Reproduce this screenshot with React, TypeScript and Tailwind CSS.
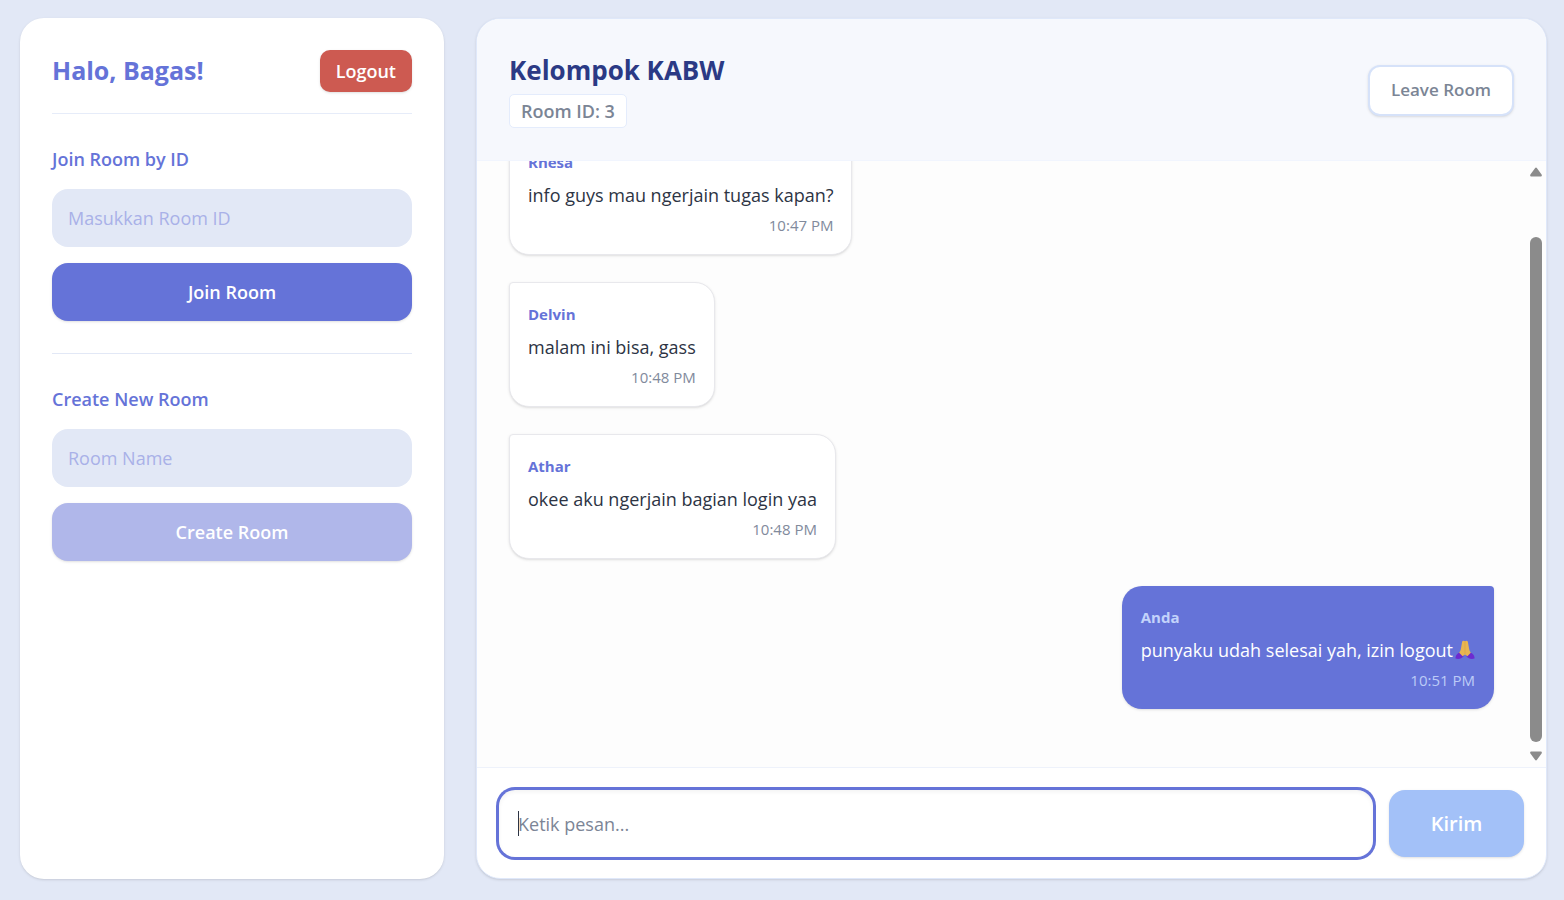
import React, { useEffect, useRef, useState } from 'react';

interface ChatMessage {
  id: number;
  sender: string;
  text: string;
  time: string;
  own?: boolean;
  folded?: boolean;
}

const messages: ChatMessage[] = [
  { id: 1, sender: 'Rhesa', text: 'info guys mau ngerjain tugas kapan?', time: '10:47 PM' },
  { id: 2, sender: 'Delvin', text: 'malam ini bisa, gass', time: '10:48 PM' },
  { id: 3, sender: 'Athar', text: 'okee aku ngerjain bagian login yaa', time: '10:48 PM' },
  { id: 4, sender: 'Anda', text: 'punyaku udah selesai yah, izin logout', time: '10:51 PM', own: true, folded: true },
];

const FoldedHands: React.FC = () => (
  <svg viewBox="0 0 20 20" className="ml-0.5 inline-block h-5 w-5 align-[-3px]" role="img" aria-label="folded hands">
    <path d="M0.5 18.5C0.3 15.5 2.2 13 5 12.4L9 15.6C8 17.8 5.5 19 3 19Z" fill="#6d2bd0" />
    <path d="M19.5 18.5C19.7 15.5 17.8 13 15 12.4L11 15.6C12 17.8 14.5 19 17 19Z" fill="#6d2bd0" />
    <path
      d="M7.2 1.6C7.6 0.5 9.2 0.4 10 1.2C10.8 0.4 12.4 0.5 12.8 1.6L14 8.2C14.2 10 15 11.4 15.8 12.8L12.4 16.2L10 14.4L7.6 16.2L4.2 12.8C5 11.4 5.8 10 6 8.2Z"
      fill="#e9b552"
    />
    <path d="M10 1.6V14" stroke="#dba446" strokeWidth="0.7" />
  </svg>
);

const MessageBubble: React.FC<{ message: ChatMessage }> = ({ message }) => {
  const { sender, text, time, own, folded } = message;
  return (
    <div
      className={`max-w-[70%] shrink-0 py-[18px] ${
        own
          ? 'self-end rounded-[20px] rounded-tr-sm bg-[#6573d8] px-[19px] text-white shadow-sm'
          : 'self-start rounded-[20px] rounded-tl-sm border border-[#e8e8ec] bg-white px-[18px] text-[#2d3444] shadow-sm'
      }`}
    >
      <div className={`text-[15px] leading-[27px] font-bold ${own ? 'text-[#c3d3fb]' : 'text-[#6573d8]'}`}>{sender}</div>
      <p className="my-1 text-[18px] leading-[30px]">
        {text}
        {folded && <FoldedHands />}
      </p>
      <div className={`text-right text-[15px] leading-[22px] ${own ? 'text-[#bccbf7]' : 'text-[#818a9c]'}`}>{time}</div>
    </div>
  );
};

const Scrollbar: React.FC = () => (
  <div className="flex w-5 flex-col items-center gap-[7px] py-1" aria-hidden="true">
    <svg viewBox="0 0 12 14" className="h-[14px] w-3 shrink-0" fill="#8b8b8b">
      <path d="M5 3.2Q6 1.8 7 3.2L11.6 9.6Q12.4 11.3 10.8 11.5H1.2Q-0.4 11.3 0.4 9.6Z" />
    </svg>
    <div className="flex w-3 flex-1 flex-col">
      <div className="grow-[51]" />
      <div className="grow-[505] rounded-full bg-[#8b8b8b]" />
    </div>
    <svg viewBox="0 0 12 14" className="h-[14px] w-3 shrink-0" fill="#8b8b8b">
      <path d="M5 10.8Q6 12.2 7 10.8L11.6 4.4Q12.4 2.7 10.8 2.5H1.2Q-0.4 2.7 0.4 4.4Z" />
    </svg>
  </div>
);

interface RoomFormProps {
  id: string;
  label: string;
  placeholder: string;
  action: string;
  disabled?: boolean;
}

const RoomForm: React.FC<RoomFormProps> = ({ id, label, placeholder, action, disabled }) => (
  <form className="flex flex-col gap-4 py-8" onSubmit={(e) => e.preventDefault()}>
    <label htmlFor={id} className="text-[18px] leading-[27px] font-semibold text-[#6573d8]">
      {label}
    </label>
    <input
      id={id}
      type="text"
      placeholder={placeholder}
      className="h-[58px] w-full rounded-2xl bg-[#e2e8f6] px-4 text-[18px] text-[#2d3444] outline-none placeholder:text-[#a9b1e8]"
    />
    <button
      type="submit"
      disabled={disabled}
      className="h-[58px] w-full rounded-2xl bg-[#6573d8] text-[18px] font-semibold text-white shadow-sm disabled:bg-[#b0b7ea]"
    >
      {action}
    </button>
  </form>
);

export default function App() {
  const [draft, setDraft] = useState('');
  const listRef = useRef<HTMLDivElement>(null);

  // Start at the latest message
  useEffect(() => {
    if (listRef.current) {
      listRef.current.scrollTop = listRef.current.scrollHeight;
    }
  }, []);

  return (
    <div className="flex h-screen gap-8 bg-[#e2e8f6] pt-[18px] pr-[17px] pb-[21px] pl-5 font-['Segoe_UI','Open_Sans',sans-serif]">
      {/* Sidebar */}
      <aside className="w-[424px] shrink-0 rounded-3xl bg-white p-8 shadow-sm">
        <div className="flex items-center justify-between border-b border-[#e6ecf9] pb-[21px]">
          <h1 className="text-[25px] font-bold text-[#6573d8]">Halo, Bagas!</h1>
          <button type="button" className="h-[42px] rounded-[10px] bg-[#cd5a51] px-4 text-[18px] font-semibold text-white shadow-sm">
            Logout
          </button>
        </div>
        <div className="divide-y divide-[#e2e8f6]">
          <RoomForm id="room-id" label="Join Room by ID" placeholder="Masukkan Room ID" action="Join Room" />
          <RoomForm id="room-name" label="Create New Room" placeholder="Room Name" action="Create Room" disabled />
        </div>
      </aside>

      {/* Chat */}
      <main className="flex min-w-0 flex-1 flex-col overflow-hidden rounded-3xl border border-[#dfe8fa] bg-white shadow-sm">
        <header className="flex items-center justify-between border-b border-[#f1f5fe] bg-[#f6f8fd] px-8 pt-[33px] pb-8">
          <div className="flex flex-col items-start gap-[6px]">
            <h2 className="text-[26px] leading-9 font-bold text-[#2b3a85]">Kelompok KABW</h2>
            <span className="rounded-[5px] border border-[#e4ecfc] bg-white px-[11px] text-[18px] leading-8 font-semibold text-[#7b8595]">
              Room ID: 3
            </span>
          </div>
          <button
            type="button"
            className="h-[51px] rounded-xl border-2 border-[#d6e2f9] bg-white px-[21px] text-[17px] font-semibold text-[#7b8595] shadow-sm"
          >
            Leave Room
          </button>
        </header>

        <div className="flex min-h-0 flex-1 bg-[#fdfdfd]">
          <div
            ref={listRef}
            className="flex flex-1 flex-col gap-[27px] overflow-y-auto px-8 pt-[42px] pb-[58px] [scrollbar-width:none]"
          >
            {messages.map((message) => (
              <MessageBubble key={message.id} message={message} />
            ))}
          </div>
          <Scrollbar />
        </div>

        <form className="flex gap-4 border-t border-[#eef2fb] px-[22px] pt-[22px] pb-[21px]" onSubmit={(e) => e.preventDefault()}>
          <div className="relative min-w-0 flex-1">
            <input
              type="text"
              aria-label="Ketik pesan"
              autoFocus
              value={draft}
              onChange={(e) => setDraft(e.target.value)}
              placeholder="Ketik pesan..."
              className="h-[67px] w-full rounded-2xl px-[19px] text-[18px] text-[#2d3444] inset-shadow-sm ring-3 ring-[#6573d8] outline-none placeholder:text-[#7c8596] placeholder-shown:caret-transparent"
            />
            {!draft && <span className="pointer-events-none absolute inset-y-[21px] left-[19px] w-px bg-[#2d3444]" />}
          </div>
          <button
            type="submit"
            disabled={!draft}
            className="h-[67px] w-[135px] rounded-2xl bg-[#6fa2f5] text-[20px] font-semibold text-white shadow-sm disabled:bg-[#a3c1f8]"
          >
            Kirim
          </button>
        </form>
      </main>
    </div>
  );
}
